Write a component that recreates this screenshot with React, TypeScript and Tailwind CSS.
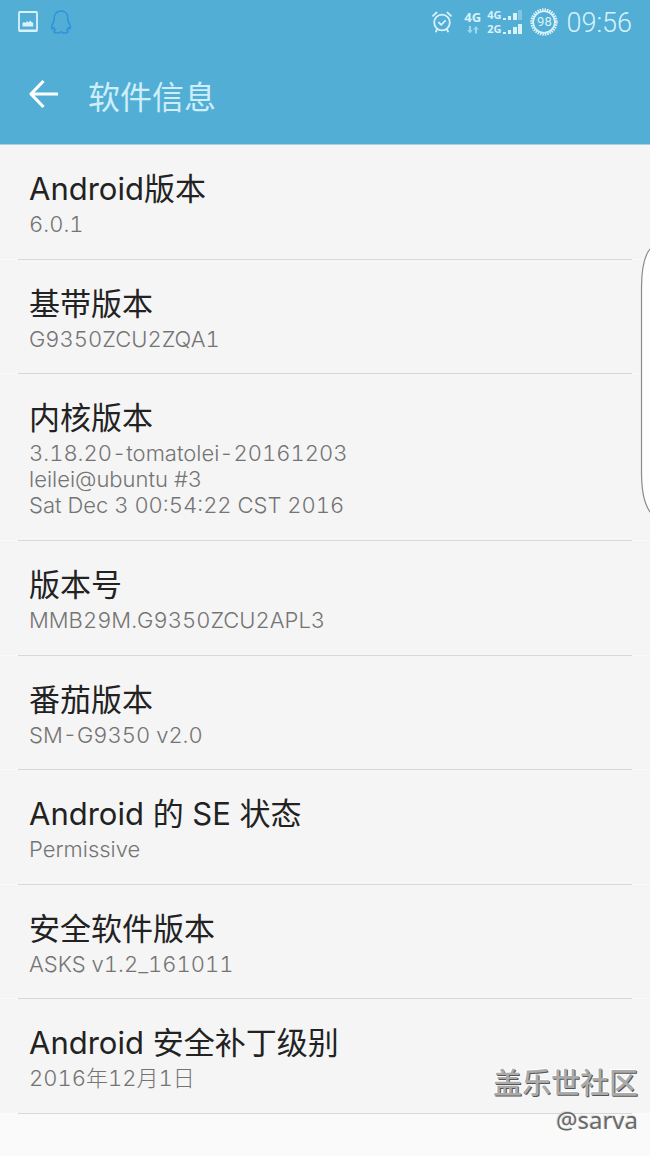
type InfoItem = {
  title: string;
  lines: string[];
};

const ITEMS: InfoItem[] = [
  { title: "Android版本", lines: ["6.0.1"] },
  { title: "基带版本", lines: ["G9350ZCU2ZQA1"] },
  {
    title: "内核版本",
    lines: ["3.18.20-tomatolei-20161203", "leilei@ubuntu #3", "Sat Dec 3 00:54:22 CST 2016"],
  },
  { title: "版本号", lines: ["MMB29M.G9350ZCU2APL3"] },
  { title: "番茄版本", lines: ["SM-G9350 v2.0"] },
  { title: "Android 的 SE 状态", lines: ["Permissive"] },
  { title: "安全软件版本", lines: ["ASKS v1.2_161011"] },
  { title: "Android 安全补丁级别", lines: ["2016年12月1日"] },
];

function PictureIcon() {
  return (
    <svg width="20" height="22" viewBox="0 0 20 22" fill="none" aria-hidden="true">
      <rect x="1" y="1" width="18" height="19" rx="1" stroke="#d8f2fb" strokeWidth="1.8" />
      <path d="M1 18.5h18v2.2H1z" fill="#d8f2fb" />
      <path d="M4.5 15.5v-3.5l1.5-1 1.5 1 1.5-2 1.5 1.5L12 9.5l1.5 1.5 1.7 1v3.5z" fill="#d8f2fb" />
    </svg>
  );
}

function PenguinIcon() {
  return (
    <svg width="22" height="24" viewBox="0 0 22 24" fill="none" aria-hidden="true">
      <path
        d="M11 1C6.8 1 4.2 4 4.2 8v2.3c-.3.7-.8 1.3-.8 2.2-1 1.5-1.9 3-1.9 4.7 0 1 .2 1.7.6 1.7.5 0 1.1-.8 1.6-1.6.3 1.2.8 2.1 1.6 2.9-1 .4-1.4.9-1.4 1.5 0 .8 1.4 1.2 3.1 1.2 1.6 0 3-.4 3.5-1h1c.5.6 1.9 1 3.5 1 1.7 0 3.1-.4 3.1-1.2 0-.6-.4-1.1-1.4-1.5.8-.8 1.3-1.7 1.6-2.9.5.8 1.1 1.6 1.6 1.6.4 0 .6-.7.6-1.7 0-1.7-.9-3.2-1.9-4.7 0-.9-.5-1.5-.8-2.2V8c0-4-2.6-7-6.8-7z"
        stroke="#2f93dc"
        strokeWidth="1.5"
        strokeLinejoin="round"
      />
    </svg>
  );
}

function AlarmIcon() {
  return (
    <svg width="20" height="22" viewBox="0 0 20 22" fill="none" stroke="#d8f2fb" strokeLinecap="round" aria-hidden="true">
      <circle cx="10" cy="11.5" r="7.8" strokeWidth="1.8" />
      <path d="M6.8 11.5l2.4 2.3 4-4" strokeWidth="1.8" />
      <path d="M1 4.8L4.6 1.5M19 4.8L15.4 1.5M5 18.5l-1 2M15 18.5l1 2" strokeWidth="1.8" />
    </svg>
  );
}

function DataArrows() {
  return (
    <svg width="12" height="8" viewBox="0 0 12 8" fill="#9bd8ee" aria-hidden="true">
      <path d="M2 0h2v4h1.8L3 7.5.2 4H2zM8 7.5h2v-4h1.8L9 0 6.2 3.5H8z" />
    </svg>
  );
}

function SignalBars({ weak = false }: { weak?: boolean }) {
  return (
    <svg width="19" height="10" viewBox="0 0 19 10" fill="#d8f2fb" aria-hidden="true">
      <rect x="0" y="8" width="3" height="2" />
      <rect x="5" y="6" width="3" height="4" />
      <rect x="10" y="3" width="4" height="7" />
      <rect x="15" y="0" width="4" height="10" opacity={weak ? 0.35 : 1} />
    </svg>
  );
}

function BatteryRing() {
  return (
    <span className="relative flex h-7 w-7 items-center justify-center">
      <svg className="absolute inset-0" width="28" height="28" viewBox="0 0 28 28" fill="none" aria-hidden="true">
        <circle cx="14" cy="14" r="10.8" stroke="#d8f2fb" strokeWidth="1.5" />
        <circle cx="14" cy="14" r="12" stroke="#d8f2fb" strokeWidth="3.4" strokeDasharray="1.5 0.86" />
      </svg>
      <span className="font-[Roboto] text-[13px] leading-[14px]">98</span>
    </span>
  );
}

function StatusBar() {
  return (
    <div className="flex h-11 items-center justify-between px-[18px] text-[#d8f2fb]">
      <div className="flex items-center gap-3">
        <PictureIcon />
        <PenguinIcon />
      </div>
      <div className="flex items-center">
        <AlarmIcon />
        <div className="ml-3 flex flex-col items-center gap-0.5 font-['Open_Sans'] text-[13px] leading-[14px] font-bold">
          <span>4G</span>
          <DataArrows />
        </div>
        <div className="ml-1.5 flex flex-col font-['Open_Sans'] text-[11px] leading-[14px] font-bold">
          <span className="flex items-center gap-0.5">
            4G
            <SignalBars weak />
          </span>
          <span className="flex items-center gap-0.5">
            2G
            <SignalBars />
          </span>
        </div>
        <div className="ml-2">
          <BatteryRing />
        </div>
        <time className="ml-2 pt-0.5 font-[Roboto] text-[27px] leading-8 font-light">09:56</time>
      </div>
    </div>
  );
}

function TitleBar() {
  return (
    <div className="flex h-[100px] items-center pl-7">
      <button type="button" aria-label="返回" className="flex h-8 w-8 items-center">
        <svg width="30" height="30" viewBox="0 0 30 30" fill="none" aria-hidden="true">
          <path
            d="M15.5 2L3 15l12.5 13M3 15h27"
            stroke="#fff"
            strokeWidth="3.2"
            strokeLinejoin="round"
          />
        </svg>
      </button>
      <h1 className="ml-7 pt-2 text-[32px] leading-10 text-[#cdeefa]">软件信息</h1>
    </div>
  );
}

function InfoRow({ title, lines }: InfoItem) {
  return (
    <li className="flex grow flex-col">
      <div className="grow bg-[#f5f5f5] px-[29px] pt-6 pb-[21px]">
        <h2 className="mb-0.5 text-[31px] leading-10 text-[#222]">{title}</h2>
        {lines.map((line) => (
          <p key={line} className="text-[22px] leading-[26px] font-light text-[#747474] tabular-nums">
            {line}
          </p>
        ))}
      </div>
      <div className="mx-[18px] h-px bg-[#d8d8d8]" />
    </li>
  );
}

function EdgeHandle() {
  return (
    <svg
      className="absolute top-[246px] right-0"
      width="10"
      height="270"
      viewBox="0 0 10 270"
      aria-hidden="true"
    >
      <path
        d="M11 2C5 8 1.5 20 1.5 42V226C1.5 248 5 260 11 267"
        fill="#fdfdfd"
        stroke="#8a8a8a"
        strokeWidth="1.2"
      />
    </svg>
  );
}

function Watermark() {
  return (
    <div className="absolute right-3 bottom-5 flex flex-col items-end">
      <span className="text-[29px] leading-10 font-medium text-[#aaa] [text-shadow:1px_1px_0_#555,-1px_-1px_0_#fff]">
        盖乐世社区
      </span>
      <span className="font-['Noto_Sans'] text-2xl leading-8 text-[#6a6a6a] [text-shadow:-1px_-1px_0_#ddd]">
        @sarva
      </span>
    </div>
  );
}

export default function App() {
  return (
    <div className="relative flex min-h-screen flex-col overflow-hidden bg-[#fafafa] font-[Inter,'Noto_Sans_CJK_SC',sans-serif]">
      <header className="border-b border-[#a9cfdf] bg-[#52aed5]">
        <StatusBar />
        <TitleBar />
      </header>
      <main className="flex grow flex-col">
        <ul className="flex grow flex-col">
          {ITEMS.map((item) => (
            <InfoRow key={item.title} {...item} />
          ))}
        </ul>
      </main>
      <footer className="h-[42px]" />
      <EdgeHandle />
      <Watermark />
    </div>
  );
}
